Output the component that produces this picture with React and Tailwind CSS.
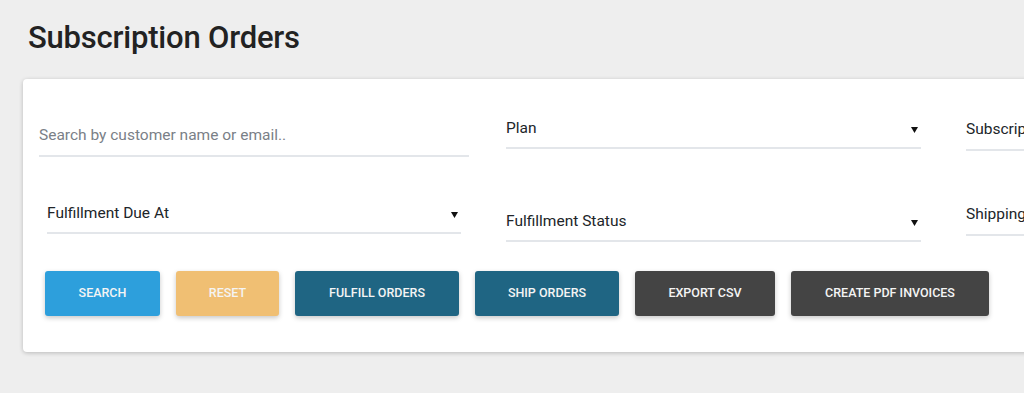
import React from "react";

function Arrow() {
  return (
    <svg width="7" height="6" viewBox="0 0 7 6" className="mt-[3px] mr-[3px] shrink-0">
      <polygon points="0,0 7,0 3.5,6" fill="#111" />
    </svg>
  );
}

function SelectField({ label, className }) {
  return (
    <div className={"flex shrink-0 items-center justify-between border-b-2 border-[#e3e6ea] pb-[8px] " + className}>
      <span className="text-[15.5px] leading-[22px] text-[#212529] whitespace-nowrap">{label}</span>
      <Arrow />
    </div>
  );
}

function Btn({ label, className }) {
  return (
    <button
      className={
        "h-[45px] shrink-0 rounded-[3px] text-[12.5px] font-medium uppercase text-[#f4f4f4] shadow-[0_2px_5px_rgba(0,0,0,0.22)] " +
        className
      }
    >
      {label}
    </button>
  );
}

export default function App() {
  return (
    <div
      className="w-[1024px] h-[393px] overflow-hidden bg-[#eeeeee] pt-[20px]"
      style={{ fontFamily: "Roboto, 'Liberation Sans', sans-serif" }}
    >
      <h1 className="ml-[28px] text-[31px] leading-[36px] font-medium text-[#222] tracking-[-0.2px]">
        Subscription Orders
      </h1>
      <div className="ml-[23px] mt-[23px] w-[1100px] rounded-[4px] bg-white pl-[16px] pt-[38px] pb-[36px] shadow-[0_1px_4px_rgba(0,0,0,0.22)]">
        <div className="flex items-start">
          <div className="mt-[6px] w-[430px] shrink-0 border-b-2 border-[#e3e6ea] pb-[8px]">
            <span className="text-[15.5px] leading-[22px] text-[#7a8087]">Search by customer name or email..</span>
          </div>
          <SelectField label="Plan" className="ml-[37px] w-[415px]" />
          <div className="ml-[45px] w-[300px] shrink-0 border-b-2 border-[#e3e6ea] pb-[8px]">
            <span className="text-[15.5px] leading-[22px] text-[#212529]">Subscription Status</span>
          </div>
        </div>
        <div className="mt-[45px] flex items-start">
          <SelectField label="Fulfillment Due At" className="ml-[8px] w-[414px]" />
          <SelectField label="Fulfillment Status" className="ml-[45px] mt-[8px] w-[415px]" />
          <div className="ml-[45px] w-[300px] shrink-0 border-b-2 border-[#e3e6ea] pb-[8px]">
            <span className="text-[15.5px] leading-[22px] text-[#212529]">Shipping Status</span>
          </div>
        </div>
        <div className="mt-[29px] ml-[6px] flex gap-[16px]">
          <Btn label="Search" className="w-[115px] bg-[#2d9fdc]" />
          <Btn label="Reset" className="w-[103px] bg-[#f0bf73]" />
          <Btn label="Fulfill Orders" className="w-[164px] bg-[#1f6583]" />
          <Btn label="Ship Orders" className="w-[144px] bg-[#1f6583]" />
          <Btn label="Export CSV" className="w-[140px] bg-[#444444]" />
          <Btn label="Create PDF Invoices" className="w-[198px] bg-[#444444]" />
        </div>
      </div>
    </div>
  );
}
